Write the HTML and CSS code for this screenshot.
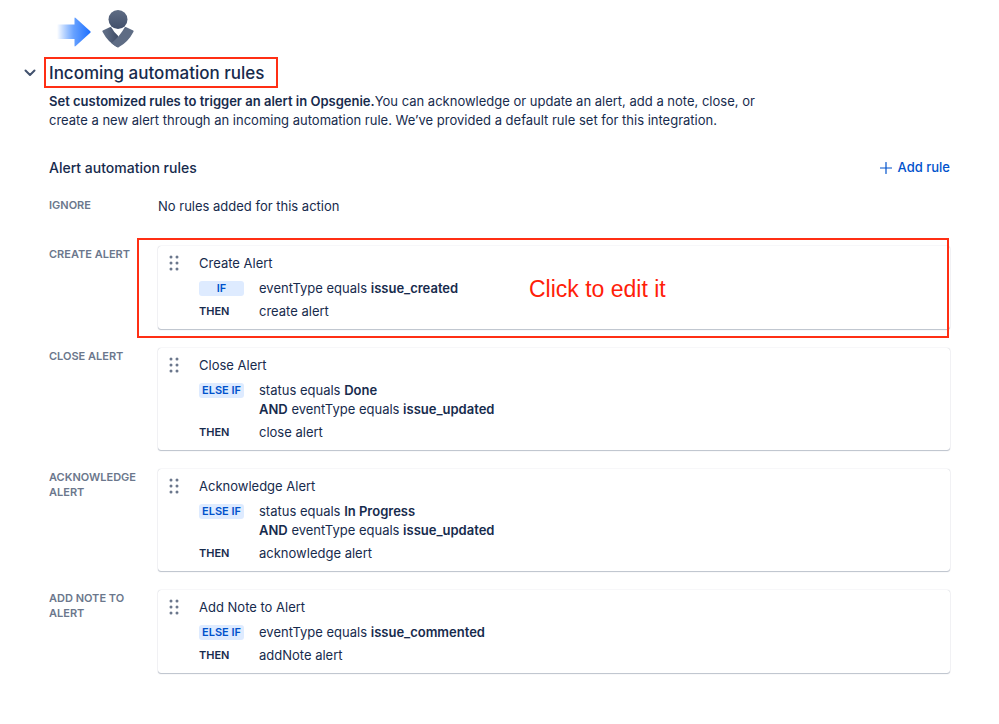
FILE: index.html
```html
<!DOCTYPE html>
<html lang="en">
<head>
<meta charset="utf-8">
<title>Incoming automation rules</title>
<link rel="stylesheet" href="styles.css">
</head>
<body>
<main class="page">
  <div class="flow-icons">
    <svg class="arrow" width="36" height="30" viewBox="0 0 36 30" aria-hidden="true">
      <defs><linearGradient id="arrow-fill" x1="0" y1="0" x2="1" y2="0"><stop offset="0" stop-color="#2a7dff" stop-opacity="0"/><stop offset=".5" stop-color="#4089ff" stop-opacity=".8"/><stop offset="1" stop-color="#1a6dff"/></linearGradient></defs>
      <path d="M1 7.500H18.500V1.500Q18.500 0 19.700 1L34.300 14.200Q35.200 15 34.300 15.800L19.700 29Q18.500 30 18.500 28.500V22H1Z" fill="url(#arrow-fill)"/>
    </svg>
    <svg class="opsgenie" width="32" height="38" viewBox="0 0 32 38" aria-hidden="true">
      <defs>
        <linearGradient id="head-fill" x1="0" y1="0" x2="0" y2="1"><stop offset="0" stop-color="#5e6c84"/><stop offset="1" stop-color="#42506b"/></linearGradient>
        <linearGradient id="wing-fill" x1="0" y1="0" x2="1" y2="0"><stop offset=".2" stop-color="#5e6c84"/><stop offset="1" stop-color="#3d4a64"/></linearGradient>
      </defs>
      <circle cx="16" cy="9.500" r="9.500" fill="url(#head-fill)"/>
      <path d="M.8 20.600L8.200 17Q9 16.700 9.400 17.500Q12 22.300 16 25.800L16 34L16.600 37.200Q16 37.500 15.400 37.200Q6 32.500.5 21.800Q.1 21 .8 20.600Z" fill="url(#wing-fill)"/>
      <path d="M31.200 20.600L23.800 17Q23 16.700 22.600 17.500Q18.500 25.300 9.500 33.300Q12.500 36 15.400 37.200Q16 37.500 16.600 37.200Q26 32.500 31.500 21.800Q31.900 21 31.200 20.600Z" fill="#5e6c84"/>
    </svg>
  </div>

  <header class="section-head">
    <button class="toggle" type="button" aria-label="Collapse section" aria-expanded="true">
      <svg width="12" height="8" viewBox="0 0 12 8" aria-hidden="true"><path d="M1.500 1.500L6 6L10.500 1.500" fill="none" stroke="#42526e" stroke-width="2" stroke-linecap="round" stroke-linejoin="round"/></svg>
    </button>
    <h1 class="title">Incoming automation rules</h1>
  </header>
  <p class="intro"><strong>Set customized rules to trigger an alert in Opsgenie.</strong>You can acknowledge or update an alert, add a note, close, or create a new alert through an incoming automation rule. We’ve provided a default rule set for this integration.</p>

  <div class="rules-head">
    <h2 class="subtitle">Alert automation rules</h2>
    <button class="add-rule" type="button">
      <svg width="12" height="12" viewBox="0 0 12 12" aria-hidden="true"><path d="M6 .5V11.500M.5 6H11.500" stroke="#0052cc" stroke-width="1.200" stroke-linecap="round"/></svg>
      Add rule
    </button>
  </div>

  <div class="rules">
    <section class="group empty">
      <h3 class="label">Ignore</h3>
      <p class="none">No rules added for this action</p>
    </section>

    <section class="group">
      <h3 class="label">Create alert</h3>
      <article class="card">
        <svg class="grip" width="10" height="16" viewBox="0 0 10 16" aria-hidden="true"><g fill="#6b778c"><circle cx="2" cy="2" r="1.500"/><circle cx="8" cy="2" r="1.500"/><circle cx="2" cy="8" r="1.500"/><circle cx="8" cy="8" r="1.500"/><circle cx="2" cy="14" r="1.500"/><circle cx="8" cy="14" r="1.500"/></g></svg>
        <div class="rule">
          <h4 class="name">Create Alert</h4>
          <div class="line"><span class="tag">IF</span><p>eventType equals <b>issue_created</b></p></div>
          <div class="line"><span class="then">THEN</span><p>create alert</p></div>
        </div>
        <div class="callout"><span class="callout-text">Click to edit it</span></div>
      </article>
    </section>

    <section class="group">
      <h3 class="label">Close alert</h3>
      <article class="card">
        <svg class="grip" width="10" height="16" viewBox="0 0 10 16" aria-hidden="true"><g fill="#6b778c"><circle cx="2" cy="2" r="1.500"/><circle cx="8" cy="2" r="1.500"/><circle cx="2" cy="8" r="1.500"/><circle cx="8" cy="8" r="1.500"/><circle cx="2" cy="14" r="1.500"/><circle cx="8" cy="14" r="1.500"/></g></svg>
        <div class="rule">
          <h4 class="name">Close Alert</h4>
          <div class="line"><span class="tag">ELSE IF</span><p>status equals <b>Done</b><br><b>AND</b> eventType equals <b>issue_updated</b></p></div>
          <div class="line"><span class="then">THEN</span><p>close alert</p></div>
        </div>
      </article>
    </section>

    <section class="group">
      <h3 class="label">Acknowledge alert</h3>
      <article class="card">
        <svg class="grip" width="10" height="16" viewBox="0 0 10 16" aria-hidden="true"><g fill="#6b778c"><circle cx="2" cy="2" r="1.500"/><circle cx="8" cy="2" r="1.500"/><circle cx="2" cy="8" r="1.500"/><circle cx="8" cy="8" r="1.500"/><circle cx="2" cy="14" r="1.500"/><circle cx="8" cy="14" r="1.500"/></g></svg>
        <div class="rule">
          <h4 class="name">Acknowledge Alert</h4>
          <div class="line"><span class="tag">ELSE IF</span><p>status equals <b>In Progress</b><br><b>AND</b> eventType equals <b>issue_updated</b></p></div>
          <div class="line"><span class="then">THEN</span><p>acknowledge alert</p></div>
        </div>
      </article>
    </section>

    <section class="group">
      <h3 class="label">Add note to alert</h3>
      <article class="card">
        <svg class="grip" width="10" height="16" viewBox="0 0 10 16" aria-hidden="true"><g fill="#6b778c"><circle cx="2" cy="2" r="1.500"/><circle cx="8" cy="2" r="1.500"/><circle cx="2" cy="8" r="1.500"/><circle cx="8" cy="8" r="1.500"/><circle cx="2" cy="14" r="1.500"/><circle cx="8" cy="14" r="1.500"/></g></svg>
        <div class="rule">
          <h4 class="name">Add Note to Alert</h4>
          <div class="line"><span class="tag">ELSE IF</span><p>eventType equals <b>issue_commented</b></p></div>
          <div class="line"><span class="then">THEN</span><p>addNote alert</p></div>
        </div>
      </article>
    </section>
  </div>
</main>
</body>
</html>
```
FILE: styles.css
```css
* { box-sizing: border-box; }
body {
  margin: 0;
  background: #fff;
  color: #172b4d;
  font: 13px/19px Inter, "Liberation Sans", sans-serif;
}
h1, h2, h3, h4, p { margin: 0; }
b, strong { font-weight: 600; }
button { margin: 0; padding: 0; border: 0; background: none; font: inherit; cursor: pointer; }
svg { display: block; flex: none; }

.page { padding: 10px 49px 48px; }

.flow-icons { display: flex; align-items: center; gap: 10px; padding-left: 7px; }
.arrow { margin-top: 5px; }

.section-head { display: flex; align-items: center; margin: 9px 0 0 -24px; }
.toggle { width: 20px; height: 20px; margin-left: -1px; }
.title {
  padding: 3px 12px 1px 3px;
  border: 2px solid #ff2f14;
  font-size: 17px;
  line-height: 23px;
  font-weight: 500;
}
.intro { max-width: 710px; margin-top: 4px; }

.rules-head { display: flex; align-items: center; justify-content: space-between; margin-top: 28px; }
.subtitle { font-size: 14px; line-height: 19px; font-weight: 500; }
.add-rule { display: flex; align-items: center; gap: 6px; color: #0052cc; font-weight: 500; }

.rules { display: flex; flex-direction: column; gap: 19px; margin-top: 20px; }
.group { display: grid; grid-template-columns: 93px 1fr; column-gap: 16px; align-items: start; }
.empty { min-height: 30px; }
.label { padding-top: 1px; color: #6b778c; font-size: 11px; line-height: 15px; font-weight: 600; text-transform: uppercase; }

.card {
  position: relative;
  display: flex;
  gap: 20px;
  padding: 8px 11px;
  border-radius: 3px;
  background: #fff;
  box-shadow: 0 1px 1px rgba(9, 30, 66, .25), 0 0 1px rgba(9, 30, 66, .31);
}
.grip { margin-top: 1px; }
.name { margin-bottom: 6px; font-size: 13px; line-height: 19px; font-weight: 400; }
.line { display: grid; grid-template-columns: 45px 1fr; column-gap: 15px; align-items: start; }
.line + .line { margin-top: 4px; }
.tag, .then { font-size: 11px; line-height: 15px; font-weight: 600; margin-top: 2px; }
.tag { border-radius: 3px; background: #deebff; color: #0052cc; text-align: center; }

.callout {
  position: absolute;
  inset: -8px 1px -9px -21px;
  border: 2px solid #ff2f14;
  pointer-events: none;
}
.callout-text {
  position: absolute;
  top: 35px;
  left: 390px;
  color: #ff2008;
  font: 23px/28px "Liberation Sans", sans-serif;
}
```
